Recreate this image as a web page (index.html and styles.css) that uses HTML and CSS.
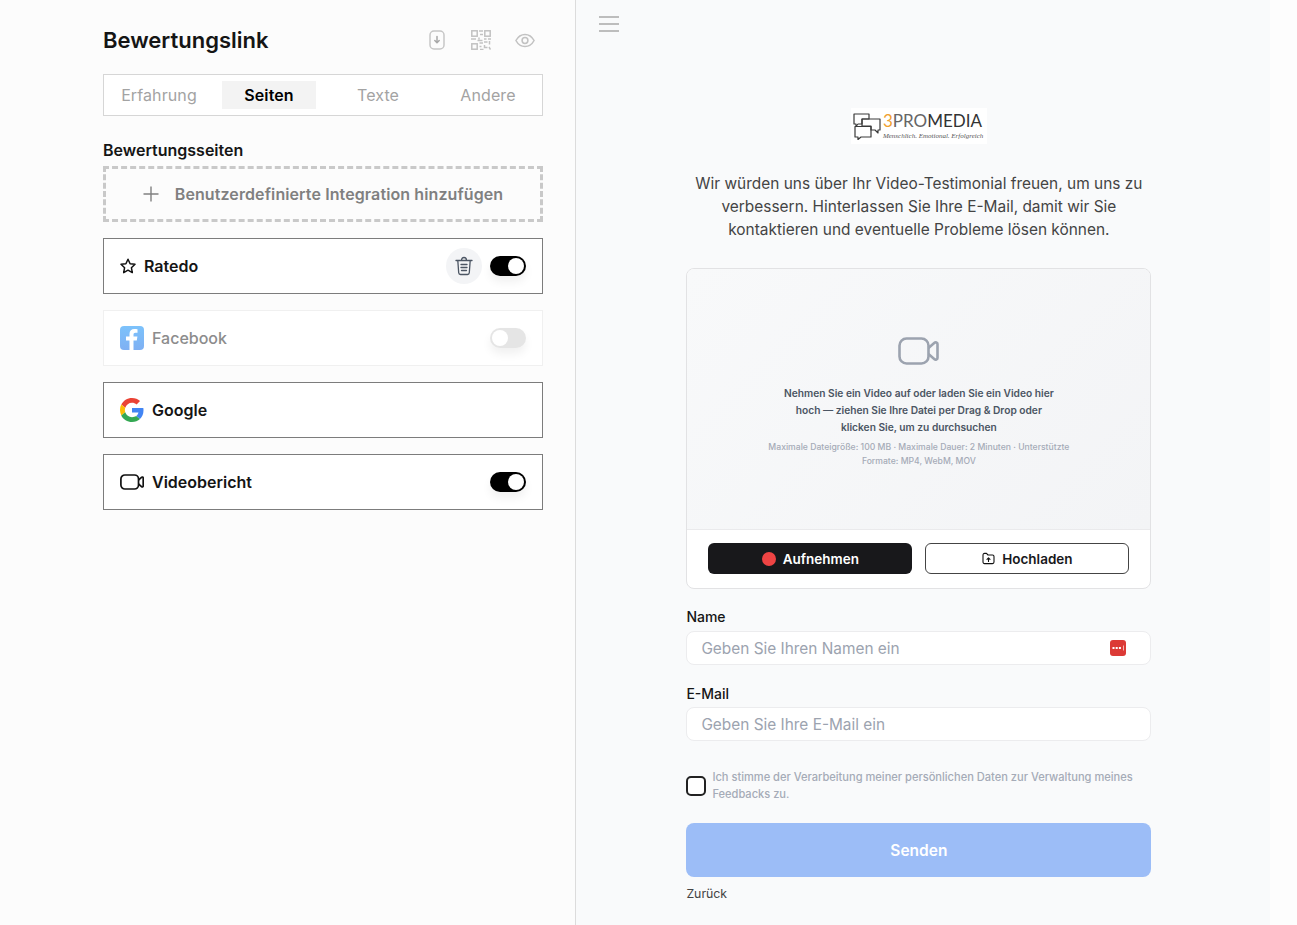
FILE: index.html
```html
<!DOCTYPE html>
<html lang="de">

<head>
    <meta charset="UTF-8">
    <meta name="viewport" content="width=device-width, initial-scale=1.0">
    <title>Bewertungslink</title>
    <link rel="stylesheet" href="styles.css">
</head>

<body>
    <!-- Settings panel -->
    <aside class="settings">
        <div class="settings-head">
            <h1>Bewertungslink</h1>
            <div class="head-icons">
                <svg class="icon-download" width="16" height="20" viewBox="0 0 16 20" fill="none" stroke="#c6c6c6" stroke-width="1.5">
                    <rect x="1" y="1" width="14" height="18" rx="4" />
                    <path d="M8 6.500v6M5.800 10.500 8 12.800l2.200-2.300" stroke="#a8a8a8" stroke-linecap="round" stroke-linejoin="round" />
                </svg>
                <svg width="20" height="20" viewBox="0 0 20 20" fill="none" stroke="#c2c2c2" stroke-width="1.500">
                    <rect x="0.800" y="0.800" width="5.400" height="5.400" />
                    <rect x="13.800" y="0.800" width="5.400" height="5.400" />
                    <rect x="0.800" y="13.800" width="5.400" height="5.400" />
                    <path d="M8 1h4M9 4.500h3M8 7.500v2M0 9h5M6.500 10.500h5M13 9h2.500M17 9h3M13 12h3.500M18.500 11v3.500M8.500 13h3.500M8.500 16.500h2M9 19.500h3.500M13.500 15v2.500h3M18 17l1.500 2.500" />
                </svg>
                <svg width="20" height="15" viewBox="0 0 22 16" fill="none" stroke="#c2c2c2" stroke-width="1.700">
                    <path d="M1 8c2.400-4.400 5.800-6.700 10-6.700S18.600 3.600 21 8c-2.400 4.400-5.800 6.700-10 6.700S3.400 12.400 1 8Z" />
                    <circle cx="11" cy="8" r="3.200" />
                </svg>
            </div>
        </div>

        <nav class="tabs">
            <a href="#" class="tab">Erfahrung</a>
            <a href="#" class="tab tab-active">Seiten</a>
            <a href="#" class="tab">Texte</a>
            <a href="#" class="tab">Andere</a>
        </nav>

        <h2 class="section-title">Bewertungsseiten</h2>

        <button class="add-integration">
            <svg width="16" height="16" viewBox="0 0 16 16" stroke="#808080" stroke-width="1.400">
                <path d="M8 0.500v15M0.500 8h15" />
            </svg>
            Benutzerdefinierte Integration hinzufügen
        </button>

        <div class="cards">
            <div class="card">
                <svg class="icon-star" width="16" height="16" viewBox="0 0 16 16" fill="none" stroke="#111" stroke-width="1.500" stroke-linejoin="round">
                    <path d="M8 1.200 10.100 5.700 15 6.300 11.400 9.700 12.300 14.600 8 12.200 3.700 14.600 4.600 9.700 1 6.300 5.900 5.700Z" />
                </svg>
                <span class="card-name">Ratedo</span>
                <span class="trash">
                    <svg width="18" height="20" viewBox="0 0 18 20" fill="none" stroke="#4b5563" stroke-width="1.300" stroke-linecap="round" stroke-linejoin="round">
                        <path d="M1 4.500h16M6.500 4.500C6.500 2.600 7.500 1.500 9 1.500s2.500 1.100 2.500 3M2.800 4.500l.9 12.300c.1 1 .8 1.700 1.800 1.700h7c1 0 1.700-.7 1.800-1.700l.9-12.300M6 8.500h6M6 11.500h6M6.500 14.500h5" />
                    </svg>
                </span>
                <span class="toggle toggle-on"><i></i></span>
            </div>

            <div class="card card-off">
                <svg class="icon-brand" width="24" height="24" viewBox="0 0 24 24">
                    <defs>
                        <linearGradient id="fb" x1="0" y1="0" x2="0" y2="1">
                            <stop offset="0" stop-color="#7cc2fb" />
                            <stop offset="1" stop-color="#7fb0f3" />
                        </linearGradient>
                    </defs>
                    <rect width="24" height="24" rx="4" fill="url(#fb)" />
                    <path d="M9.500 24v-9.500H6v-4h3.500V8c0-3.200 2-5 4.900-5 1.300 0 2.600.2 3.100.3v3.500h-2c-1.500 0-2 .9-2 1.900v1.800h3.900l-.6 4h-3.300V24Z" fill="#fff" />
                </svg>
                <span class="card-name">Facebook</span>
                <span class="toggle"><i></i></span>
            </div>

            <div class="card">
                <svg class="icon-brand" width="24" height="24" viewBox="0 0 48 48">
                    <path fill="#EA4335" d="M24 9.500c3.500 0 6.700 1.200 9.200 3.600l6.900-6.900C35.900 2.400 30.500 0 24 0 14.600 0 6.500 5.400 2.600 13.200l8 6.200C12.400 13.700 17.700 9.500 24 9.500z" />
                    <path fill="#4285F4" d="M47 24.500c0-1.600-.1-3.100-.4-4.500H24v9h12.900c-.6 3-2.200 5.500-4.700 7.200l7.700 6c4.500-4.200 7.100-10.300 7.100-17.700z" />
                    <path fill="#FBBC05" d="M10.500 28.600c-.5-1.400-.8-3-.8-4.600s.3-3.200.8-4.600l-8-6.200C.9 16.500 0 20.100 0 24s.9 7.500 2.600 10.800l7.900-6.200z" />
                    <path fill="#34A853" d="M24 48c6.500 0 11.900-2.100 15.900-5.800l-7.700-6c-2.200 1.400-4.900 2.300-8.200 2.300-6.300 0-11.600-4.200-13.500-9.900l-8 6.200C6.500 42.600 14.600 48 24 48z" />
                </svg>
                <span class="card-name">Google</span>
            </div>

            <div class="card">
                <svg class="icon-brand" width="24" height="16" viewBox="0 0 24 16" fill="none" stroke="#111" stroke-width="1.700" stroke-linejoin="round">
                    <rect x="0.900" y="1" width="17.600" height="14" rx="4" />
                    <path d="M18.500 6 21.800 3.200c.5-.4 1.400 0 1.400.6v8.400c0 .6-.9 1-1.400.6L18.500 10" />
                </svg>
                <span class="card-name">Videobericht</span>
                <span class="toggle toggle-on"><i></i></span>
            </div>
        </div>
    </aside>

    <!-- Preview -->
    <main class="preview">
        <button class="menu-btn" aria-label="Menu"><span></span><span></span><span></span></button>

        <div class="form-col">
            <div class="logo">
                <svg class="logo-mark" width="28" height="27" viewBox="0 0 28 27" fill="none" stroke="#3a3a3a" stroke-width="1.200" stroke-linejoin="round">
                    <path d="M1 1h15v5H9v5H5l-2 2.500V11H1Z" />
                    <path d="M9 6h18v11h-2v3l-3-3h-4v-4H9Z" />
                    <path d="M2 13.500h16V24H8l-3 2.500V24H2Z" />
                </svg>
                <div class="logo-text">
                    <div class="logo-name"><span class="logo-three">3</span><span class="logo-pro">PRO</span>MEDIA</div>
                    <div class="logo-sub">Menschlich. Emotional. Erfolgreich</div>
                </div>
            </div>

            <p class="intro">Wir würden uns über Ihr Video-Testimonial freuen, um uns zu verbessern. Hinterlassen Sie Ihre E-Mail, damit wir Sie kontaktieren und eventuelle Probleme lösen können.</p>

            <div class="video-box">
                <div class="video-drop">
                    <svg width="41" height="28" viewBox="0 0 41 28" fill="none" stroke="#9ca3af" stroke-width="2.600" stroke-linejoin="round">
                        <rect x="1.500" y="1.500" width="29" height="25" rx="7" />
                        <path d="M30.500 11 36.500 5.800c1-.8 3-.3 3 1.200v14c0 1.500-2 2-3 1.200L30.500 17" />
                    </svg>
                    <p class="drop-title">Nehmen Sie ein Video auf oder laden Sie ein Video hier hoch — ziehen Sie Ihre Datei per Drag &amp; Drop oder klicken Sie, um zu durchsuchen</p>
                    <p class="drop-hint">Maximale Dateigröße: 100 MB · Maximale Dauer: 2 Minuten · Unterstützte Formate: MP4, WebM, MOV</p>
                </div>
                <div class="video-actions">
                    <button class="btn btn-dark"><span class="rec-dot"></span>Aufnehmen</button>
                    <button class="btn btn-light">
                        <svg width="13" height="13" viewBox="0 0 13 13" fill="none" stroke="#111" stroke-width="1.100" stroke-linejoin="round" stroke-linecap="round">
                            <path d="M1 3c0-1 .6-1.600 1.500-1.600h2L6 3h4.500c.9 0 1.500.6 1.500 1.500v5.500c0 1-.6 1.600-1.500 1.600h-8C1.600 11.600 1 11 1 10Z" />
                            <path d="M6.500 9.500V6M5 7.300l1.500-1.500L8 7.300" />
                        </svg>
                        Hochladen
                    </button>
                </div>
            </div>

            <label class="field-label">Name</label>
            <div class="input-wrap">
                <input class="text-input" type="text" placeholder="Geben Sie Ihren Namen ein">
                <svg class="input-badge" width="16" height="16" viewBox="0 0 16 16">
                    <rect width="16" height="16" rx="3" fill="#dc3a36" />
                    <path d="M2.500 7h2v2h-2ZM5.700 7h2v2h-2ZM8.900 7h2v2h-2Z" fill="#fff" />
                    <path d="M13.500 5.500v5" stroke="#f3b5b3" stroke-width="1" />
                </svg>
            </div>

            <label class="field-label field-label-mail">E-Mail</label>
            <input class="text-input" type="text" placeholder="Geben Sie Ihre E-Mail ein">

            <div class="consent">
                <span class="checkbox"></span>
                <span>Ich stimme der Verarbeitung meiner persönlichen Daten zur Verwaltung meines Feedbacks zu.</span>
            </div>

            <button class="submit">Senden</button>
            <a href="#" class="back">Zurück</a>
        </div>
    </main>

    <div class="edge"></div>
</body>

</html>
```

FILE: styles.css
```css
* {
    box-sizing: border-box;
}

html,
body {
    height: 100%;
}

body {
    margin: 0;
    display: flex;
    height: 925px;
    overflow: hidden;
    font-family: Inter, "Liberation Sans", sans-serif;
    background: #fdfdfd;
    color: #111;
}

/* Settings panel */
.settings {
    width: 576px;
    flex-shrink: 0;
    padding: 0 32px 0 103px;
    background: #fcfcfc;
    border-right: 1px solid #dcdcdc;
}

.settings-head {
    display: flex;
    justify-content: space-between;
    align-items: center;
    height: 74px;
    padding-top: 6px;
    padding-right: 8px;
}

.settings-head h1 {
    margin: 0;
    font-size: 22px;
    line-height: 28px;
    font-weight: 600;
    color: #151515;
}

.head-icons {
    display: flex;
    align-items: center;
    gap: 24px;
}

.icon-download {
    margin-right: 2px;
}

.tabs {
    display: flex;
    align-items: center;
    height: 42px;
    padding: 0 6px;
    background: #fff;
    border: 1px solid #d6d6d6;
}

.tab {
    flex: 1;
    height: 28px;
    line-height: 28px;
    text-align: center;
    font-size: 16px;
    letter-spacing: 0.1px;
    color: #a3a3a3;
    text-decoration: none;
}

.tab:nth-child(1) {
    flex: 0 0 112px;
    padding-right: 14px;
}

.tab:nth-child(2) {
    flex: 0 0 94px;
}

.tab:nth-child(3) {
    flex: 0 0 124px;
}

.tab-active {
    background: #f3f3f3;
    color: #000;
    font-weight: 600;
}

.section-title {
    margin: 25px 0 6px;
    font-size: 16px;
    line-height: 19px;
    font-weight: 600;
    color: #151515;
}

.add-integration {
    display: flex;
    align-items: center;
    justify-content: center;
    gap: 16px;
    width: 100%;
    height: 56px;
    padding: 0;
    background: #fcfcfc;
    border: 3px dashed #c9c9c9;
    font-family: inherit;
    font-size: 16px;
    font-weight: 600;
    letter-spacing: 0.1px;
    color: #808080;
}

.cards {
    display: flex;
    flex-direction: column;
    gap: 16px;
    margin-top: 16px;
}

.card {
    display: flex;
    align-items: center;
    height: 56px;
    padding: 0 16px;
    background: #fff;
    border: 1px solid #7c7c7c;
}

.card-off {
    border-color: #f0f0f0;
}

.card-off .card-name {
    color: #8c8c8c;
    font-weight: 500;
}

.card-name {
    flex: 1;
    font-size: 16px;
    font-weight: 600;
    color: #151515;
}

.icon-star {
    margin-right: 8px;
}

.icon-brand {
    margin-right: 8px;
    flex-shrink: 0;
}

.trash {
    display: flex;
    align-items: center;
    justify-content: center;
    width: 36px;
    height: 36px;
    margin-right: 8px;
    border-radius: 50%;
    background: #f3f4f6;
}

.toggle {
    display: flex;
    align-items: center;
    width: 36px;
    height: 20px;
    padding: 2px;
    border-radius: 10px;
    background: #e5e5e5;
    box-shadow: 0 6px 10px rgba(0, 0, 0, 0.06);
}

.toggle i {
    width: 16px;
    height: 16px;
    border-radius: 50%;
    background: #fff;
}

.toggle-on {
    justify-content: flex-end;
    background: #000;
}

/* Preview */
.preview {
    width: 694px;
    flex-shrink: 0;
    background: #f9fafb;
    padding: 16px 0 0 110.4px;
}

.menu-btn {
    display: flex;
    flex-direction: column;
    justify-content: space-between;
    width: 20px;
    height: 16px;
    margin-left: -87.4px;
    padding: 0;
    border: 0;
    background: none;
}

.menu-btn span {
    height: 2px;
    background: #bdbdbd;
}

.form-col {
    display: flex;
    flex-direction: column;
    width: 465px;
    margin-top: 76px;
}

.logo {
    display: flex;
    align-items: center;
    align-self: center;
    gap: 2px;
    width: 136px;
    height: 36px;
    padding: 0 2px;
    background: #fff;
}

.logo-mark {
    flex-shrink: 0;
}

.logo-name {
    font-family: Lato, Inter, sans-serif;
    font-size: 17px;
    line-height: 19px;
    color: #333;
}

.logo-three {
    color: #f0a030;
}

.logo-pro {
    color: #666;
}

.logo-sub {
    margin-top: 1px;
    font-family: "Liberation Serif", serif;
    font-style: italic;
    font-size: 7px;
    line-height: 10px;
    color: #555;
    white-space: nowrap;
}

.intro {
    margin: 28px 0 27px;
    font-size: 15.45px;
    line-height: 23px;
    text-align: center;
    color: #444;
}

.video-box {
    height: 321px;
    display: flex;
    flex-direction: column;
    background: #fff;
    border: 1px solid #e2e2e4;
    border-radius: 8px;
    overflow: hidden;
}

.video-drop {
    flex: 1;
    display: flex;
    flex-direction: column;
    align-items: center;
    padding-top: 68px;
    background: linear-gradient(135deg, #f8f9fa, #f3f4f6);
    border-bottom: 1px solid #eaeaec;
}

.drop-title {
    width: 280px;
    margin: 20px 0 0;
    font-size: 10.2px;
    line-height: 17px;
    font-weight: 600;
    text-align: center;
    color: #4b5563;
}

.drop-hint {
    width: 310px;
    margin: 4px 0 0;
    font-size: 8.65px;
    line-height: 14px;
    font-weight: 500;
    text-align: center;
    color: #a5abb7;
}

.video-actions {
    display: grid;
    grid-template-columns: 1fr 1fr;
    gap: 13px;
    padding: 13px 21px 0;
    height: 58px;
}

.btn {
    display: flex;
    align-items: center;
    justify-content: center;
    gap: 7px;
    height: 31px;
    border-radius: 6px;
    font-family: inherit;
    font-size: 13.5px;
    font-weight: 600;
}

.btn-dark {
    background: #18181b;
    color: #fff;
    border: 0;
}

.btn-light {
    background: #fff;
    color: #18181b;
    border: 1px solid #444;
}

.rec-dot {
    width: 14px;
    height: 14px;
    border-radius: 50%;
    background: #ef4444;
}

.field-label {
    margin: 19px 0 6px;
    font-size: 14px;
    line-height: 17px;
    font-weight: 500;
    color: #151515;
}

.field-label-mail {
    margin: 20px 0 5px;
}

.input-wrap {
    position: relative;
}

.text-input {
    display: block;
    width: 100%;
    height: 34px;
    padding: 0 14px;
    background: #fff;
    border: 1px solid #ececee;
    border-radius: 8px;
    font-family: inherit;
    font-size: 15.4px;
}

.text-input::placeholder {
    color: #9ca3af;
    opacity: 1;
}

.input-badge {
    position: absolute;
    top: 9px;
    right: 25px;
}

.consent {
    display: flex;
    align-items: center;
    gap: 6px;
    margin-top: 28px;
    font-size: 11.08px;
    line-height: 17px;
    font-weight: 500;
    color: #a5abb7;
}

.checkbox {
    flex-shrink: 0;
    width: 20px;
    height: 20px;
    background: #fff;
    border: 2px solid #222;
    border-radius: 5px;
}

.submit {
    height: 54px;
    margin-top: 20px;
    background: #9cbdf7;
    border: 0;
    border-radius: 8px;
    font-family: inherit;
    font-size: 15.5px;
    font-weight: 600;
    color: #fff;
}

.back {
    margin-top: 9px;
    font-size: 12.3px;
    line-height: 16px;
    color: #444;
    text-decoration: none;
}

.edge {
    flex: 1;
    background: #fdfdfd;
}
```
